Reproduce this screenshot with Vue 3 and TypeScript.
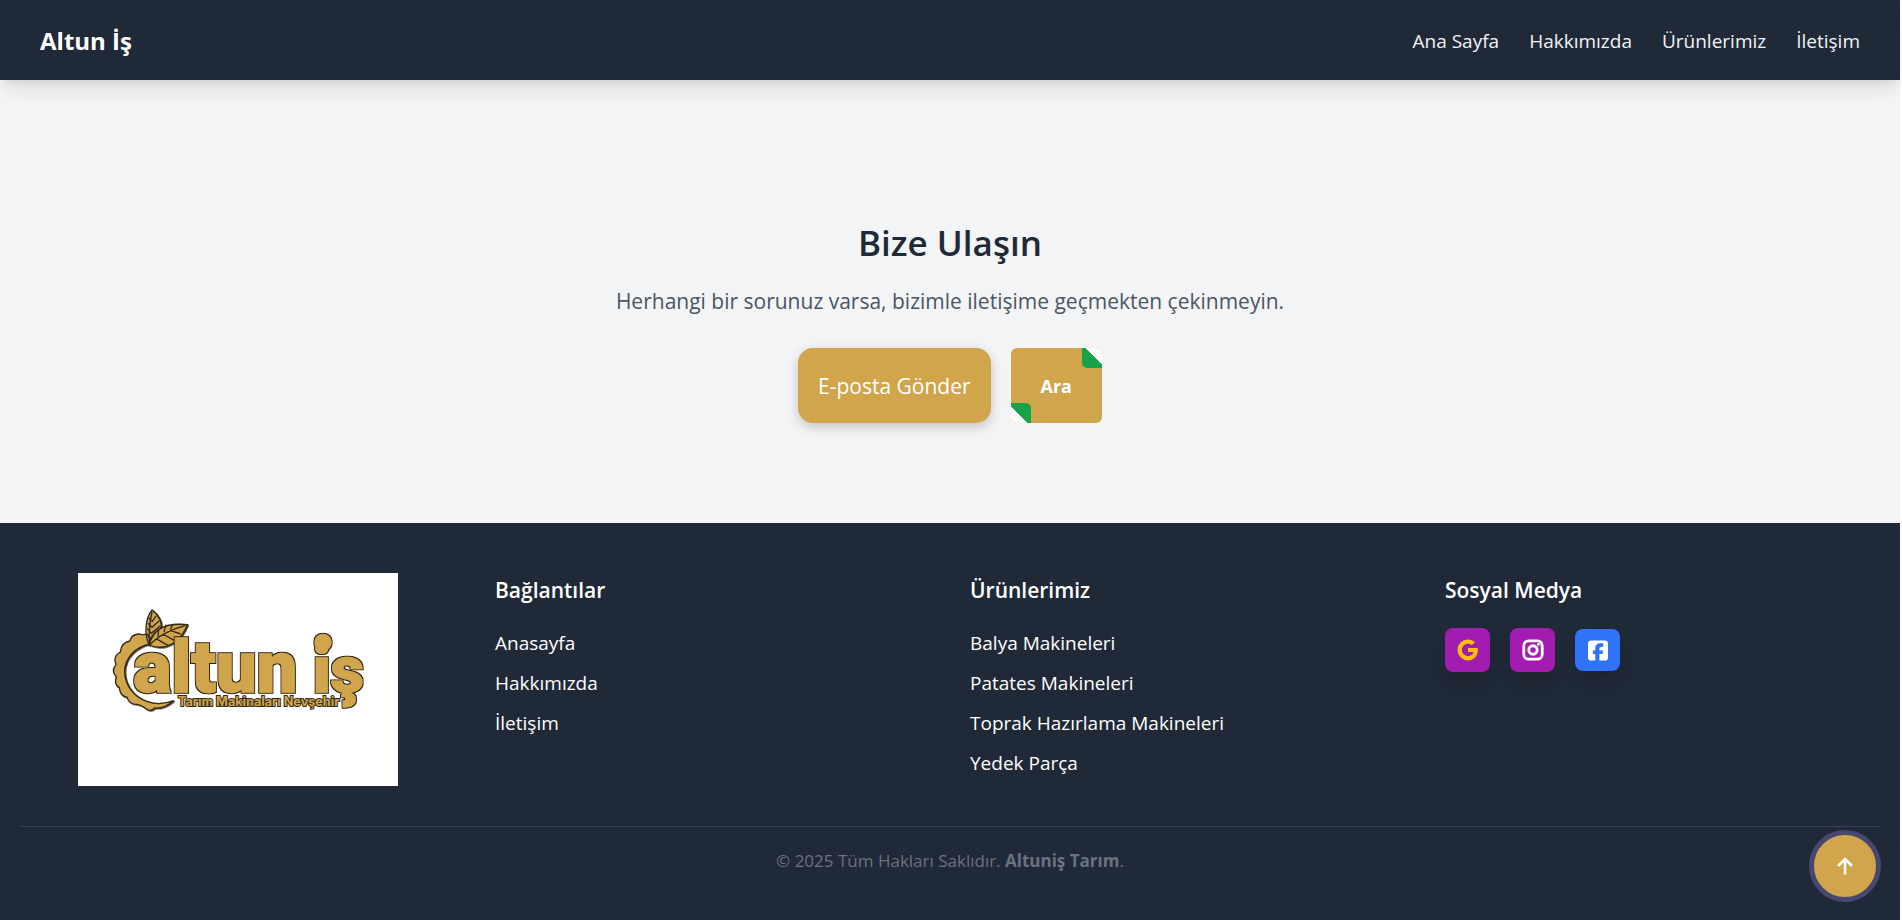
<script setup lang="ts">
interface LinkItem {
  label: string
  href: string
}

const navLinks: LinkItem[] = [
  { label: 'Ana Sayfa', href: '#anasayfa' },
  { label: 'Hakkımızda', href: '#hakkimizda' },
  { label: 'Ürünlerimiz', href: '#urunler' },
  { label: 'İletişim', href: '#iletisim' },
]

const footerColumns: { title: string; links: LinkItem[] }[] = [
  {
    title: 'Bağlantılar',
    links: [
      { label: 'Anasayfa', href: '#anasayfa' },
      { label: 'Hakkımızda', href: '#hakkimizda' },
      { label: 'İletişim', href: '#iletisim' },
    ],
  },
  {
    title: 'Ürünlerimiz',
    links: [
      { label: 'Balya Makineleri', href: '#balya' },
      { label: 'Patates Makineleri', href: '#patates' },
      { label: 'Toprak Hazırlama Makineleri', href: '#toprak' },
      { label: 'Yedek Parça', href: '#yedek' },
    ],
  },
]

function scrollToTop(): void {
  window.scrollTo({ top: 0, behavior: 'smooth' })
}
</script>

<template>
  <div class="page">
    <header class="header">
      <a class="brand" href="#anasayfa">Altun İş</a>
      <nav class="nav">
        <a v-for="link in navLinks" :key="link.href" :href="link.href">{{ link.label }}</a>
      </nav>
    </header>

    <main class="contact">
      <h1>Bize Ulaşın</h1>
      <p>Herhangi bir sorunuz varsa, bizimle iletişime geçmekten çekinmeyin.</p>
      <div class="actions">
        <button type="button" class="mail">E-posta Gönder</button>
        <button type="button" class="call">
          <span class="fold fold-top"></span>
          <span class="fold fold-bottom"></span>
          Ara
        </button>
      </div>
    </main>

    <footer class="footer">
      <div class="columns">
        <svg class="logo" viewBox="54 39 960 639" role="img" aria-label="Altun İş Tarım Makinaları Nevşehir">
          <defs>
            <filter id="bevel" x="-5%" y="-5%" width="110%" height="110%">
              <feDropShadow dx="3" dy="2" stdDeviation="1" flood-color="#15110a" flood-opacity="0.8" />
            </filter>
            <filter id="outline" x="-5%" y="-5%" width="110%" height="110%">
              <feMorphology in="SourceAlpha" operator="dilate" radius="3" result="grown" />
              <feOffset in="grown" dx="1" dy="1" result="shifted" />
              <feFlood flood-color="#2b2314" />
              <feComposite in2="shifted" operator="in" result="edge" />
              <feMerge>
                <feMergeNode in="edge" />
                <feMergeNode in="SourceGraphic" />
              </feMerge>
            </filter>
          </defs>
          <rect x="54" y="39" width="960" height="639" fill="#fff" />
          <g class="shape" filter="url(#bevel)">
            <path d="M264 220Q248 227 238 222Q215 222 209 243Q183 248 181 276Q158 288 168 314Q152 333 169 350Q161 373 178 383Q180 408 201 412Q208 434 232 433Q246 436 254 443Q268 459 284 444Q312 447 341 422Q300 438 262 425C220 410 195 375 194 335C194 292 228 262 268 252Z" />
            <path d="M268 255C250 220 258 172 276 150C296 164 308 190 302 206C288 216 274 232 268 255Z" />
            <path d="M268 255C276 216 306 186 382 194C364 244 318 276 268 255Z" />
          </g>
          <path class="vein" d="M268 250Q266 200 276 156M264 190L276 202L298 182M262 205L274 220L300 198M262 222L269 238L286 216M266 174L277 184L288 168M270 254Q302 218 376 196M294 230L296 206M312 216L318 194M330 209L340 192M288 236L324 256M308 222L344 242M330 211L362 222" />
          <g class="word" filter="url(#outline)">
            <text x="220" y="395" font-size="216">altun</text>
            <text x="758" y="395" font-size="196">iş</text>
            <circle cx="789" cy="247" r="24" />
          </g>
          <text class="tagline" x="354" y="438" font-size="38">Tarım Makinaları Nevşehir</text>
        </svg>

        <section v-for="column in footerColumns" :key="column.title">
          <h2>{{ column.title }}</h2>
          <ul>
            <li v-for="link in column.links" :key="link.label">
              <a :href="link.href">{{ link.label }}</a>
            </li>
          </ul>
        </section>

        <section>
          <h2>Sosyal Medya</h2>
          <div class="social">
            <a class="google" href="#google" aria-label="Google">
              <svg viewBox="0 0 24 24" width="28" height="28">
                <path fill="currentColor" d="M20.283 10.356h-8.327v3.451h4.792c-.446 2.193-2.313 3.453-4.792 3.453a5.27 5.27 0 0 1-5.279-5.28 5.27 5.27 0 0 1 5.279-5.279c1.259 0 2.397.447 3.29 1.178l2.6-2.599c-1.584-1.381-3.615-2.233-5.89-2.233a8.908 8.908 0 0 0-8.934 8.934 8.907 8.907 0 0 0 8.934 8.934c4.467 0 8.529-3.249 8.529-8.934 0-.528-.081-1.097-.202-1.625z" />
              </svg>
            </a>
            <a class="instagram" href="#instagram" aria-label="Instagram">
              <svg viewBox="0 0 24 24" width="28" height="28" fill="none" stroke="currentColor">
                <rect x="4.1" y="4.1" width="15.8" height="15.8" rx="4.2" stroke-width="2.4" />
                <circle cx="12" cy="12" r="3.6" stroke-width="2.5" />
                <circle cx="16.7" cy="7.3" r="1.2" fill="currentColor" stroke="none" />
              </svg>
            </a>
            <a class="facebook" href="#facebook" aria-label="Facebook">
              <svg viewBox="0 0 448 512" width="20" height="23">
                <path fill="currentColor" d="M64 32C28.7 32 0 60.7 0 96V416c0 35.3 28.7 64 64 64h98.2V334.2H109.4V256h52.8V222.3c0-87.1 39.4-127.5 125-127.5c16.2 0 44.2 3.2 55.7 6.4V172c-6-.6-16.5-1-29.6-1c-42 0-58.2 15.9-58.2 57.2V256h83.6l-14.4 78.2H255V480H384c35.3 0 64-28.7 64-64V96c0-35.3-28.7-64-64-64H64z" />
              </svg>
            </a>
          </div>
        </section>
      </div>
      <p class="copyright">© 2025 Tüm Hakları Saklıdır. <strong>Altuniş Tarım</strong>.</p>
    </footer>

    <button type="button" class="to-top" aria-label="Yukarı çık" @click="scrollToTop">
      <svg viewBox="0 0 18 20" width="18" height="20" fill="none" stroke="currentColor" stroke-width="2.6">
        <path d="M9 18.500V3M2 10L9 3L16 10" />
      </svg>
    </button>
  </div>
</template>

<style>
body {
  margin: 0;
  background: #fff;
}
</style>

<style scoped>
.page {
  display: flex;
  flex-direction: column;
  min-height: 100vh;
  margin-right: 2px;
  font-family: 'Open Sans', 'Noto Sans', sans-serif;
  font-size: 19px;
  line-height: 30px;
  color: #fff;
}

a {
  color: inherit;
  text-decoration: none;
}

button {
  padding: 0;
  border: 0;
  font-family: inherit;
  color: #fff;
  background: #d0a54b;
  cursor: pointer;
}

.header {
  position: relative;
  display: flex;
  align-items: center;
  justify-content: space-between;
  box-sizing: border-box;
  height: 80px;
  padding: 2px 40px 0;
  background: #202937;
  box-shadow: 0 12px 19px -4px rgba(0, 0, 0, 0.1), 0 5px 8px -5px rgba(0, 0, 0, 0.1);
}

.brand {
  font-size: 24px;
  font-weight: 700;
}

.nav {
  display: flex;
  gap: 30px;
  color: #f3f4f6;
}

.contact {
  display: flex;
  flex-direction: column;
  align-items: center;
  padding: 140px 20px 100px;
  text-align: center;
  background: #f3f4f6;
}

h1 {
  margin: 0 0 20px;
  font-size: 35px;
  font-weight: 600;
  line-height: 45px;
  color: #202937;
}

.contact p {
  margin: 0 0 30px;
  font-size: 21px;
  line-height: 33px;
  color: #4b5563;
}

.actions {
  display: flex;
  gap: 20px;
}

.mail {
  height: 75px;
  padding: 0 20px;
  border-radius: 15px;
  font-size: 21px;
  box-shadow: 0 4px 12px rgba(0, 0, 0, 0.2);
}

.call {
  position: relative;
  padding: 0 30px;
  overflow: hidden;
  border-radius: 6px;
  font-size: 18px;
  font-weight: 700;
}

.fold {
  position: absolute;
  width: 20px;
  height: 20px;
}

.fold-top {
  top: 0;
  right: 0;
  border-radius: 0 0 0 5px;
  background: linear-gradient(45deg, #18a34a 58%, #fff 58%);
}

.fold-bottom {
  bottom: 0;
  left: 0;
  border-radius: 0 5px 0 0;
  background: linear-gradient(225deg, #18a34a 58%, #fff 58%);
}

.footer {
  flex: 1;
  padding: 50px 20px 20px;
  background: #202937;
}

.columns {
  display: grid;
  grid-template-columns: repeat(4, 1fr);
  gap: 40px;
}

.logo {
  justify-self: center;
  width: 320px;
  height: 213px;
}

.shape {
  fill: #d0a54b;
  stroke: #332a17;
  stroke-width: 4;
}

.word {
  font-family: Roboto, sans-serif;
  font-weight: 900;
  fill: #d0a54b;
  stroke: #d0a54b;
  stroke-width: 4;
}

.vein {
  fill: none;
  stroke: #332a17;
  stroke-width: 4;
}

.tagline {
  font-family: Inter, sans-serif;
  font-weight: 700;
  fill: #d0a54b;
  stroke: #332a17;
  stroke-width: 6;
  paint-order: stroke;
}

h2 {
  margin: 0 0 20px;
  font-size: 21px;
  font-weight: 600;
  line-height: 35px;
}

ul {
  display: grid;
  gap: 10px;
  margin: 0;
  padding: 0;
  list-style: none;
}

.social {
  display: flex;
  align-items: center;
  gap: 20px;
}

.social a {
  display: flex;
  align-items: center;
  justify-content: center;
  width: 45px;
  height: 44px;
  border-radius: 8px;
  box-shadow: 0 12px 19px -4px rgba(0, 0, 0, 0.1), 0 5px 8px -5px rgba(0, 0, 0, 0.1);
}

.social .google,
.social .instagram {
  background: #a21caf;
}

.social .google {
  color: #ffc107;
}

.social .facebook {
  height: 42px;
  background: #3072f8;
}

.copyright {
  margin: 40px 0 0;
  padding-top: 20px;
  border-top: 1px solid #374151;
  font-size: 17px;
  line-height: 28px;
  text-align: center;
  color: #6b7280;
}

.to-top {
  position: fixed;
  right: 21px;
  bottom: 18px;
  display: flex;
  align-items: center;
  justify-content: center;
  width: 72px;
  height: 72px;
  border: 5px solid #474770;
  border-radius: 50%;
}
</style>
